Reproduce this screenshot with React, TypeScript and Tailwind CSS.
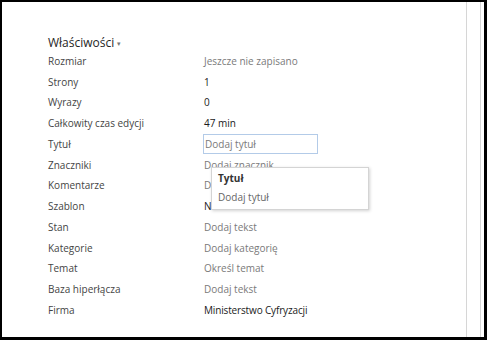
import React from "react";

const rows: { label: string; value: string; kind: "ph" | "val" | "input" }[] = [
  { label: "Rozmiar", value: "Jeszcze nie zapisano", kind: "ph" },
  { label: "Strony", value: "1", kind: "val" },
  { label: "Wyrazy", value: "0", kind: "val" },
  { label: "Całkowity czas edycji", value: "47 min", kind: "val" },
  { label: "Tytuł", value: "Dodaj tytuł", kind: "input" },
  { label: "Znaczniki", value: "Dodaj znacznik", kind: "ph" },
  { label: "Komentarze", value: "Dodaj komentarze", kind: "ph" },
  { label: "Szablon", value: "Normal", kind: "val" },
  { label: "Stan", value: "Dodaj tekst", kind: "ph" },
  { label: "Kategorie", value: "Dodaj kategorię", kind: "ph" },
  { label: "Temat", value: "Określ temat", kind: "ph" },
  { label: "Baza hiperłącza", value: "Dodaj tekst", kind: "ph" },
  { label: "Firma", value: "Ministerstwo Cyfryzacji", kind: "val" },
];

export default function App() {
  return (
    <div
      className="w-[487px] h-[340px] bg-black pt-[2px] pl-[2px] pr-[3px] pb-[3px]"
      style={{ fontFamily: '"Open Sans", "Noto Sans", sans-serif' }}
    >
      <div className="w-full h-full bg-white flex">
        <div className="flex-1 relative pl-[46px] pt-[32px]">
          <div className="flex items-center h-[18px] text-[12px] text-[#262626]">
            Właściwości
            <span className="ml-[3px] text-[7px] text-[#777] leading-none">▾</span>
          </div>
          <div className="flex flex-col -mt-[1px]">
            {rows.map((r) => (
              <div key={r.label} className="flex items-center h-[20.75px] text-[10px]">
                <div className="w-[156px] text-[#444]">{r.label}</div>
                {r.kind === "input" ? (
                  <div className="-ml-[1px] w-[115px] h-[20px] border border-[#b3cbe8] flex items-center pl-[1px] text-[#7a7a7a]">
                    {r.value}
                  </div>
                ) : (
                  <div
                    className={
                      r.kind === "ph"
                        ? "text-[#7a7a7a]"
                        : r.label === "Firma"
                        ? "text-[#1a1a1a] tracking-[-0.15px]"
                        : "text-[#1a1a1a]"
                    }
                  >
                    {r.value}
                  </div>
                )}
              </div>
            ))}
          </div>
          <div className="absolute left-[209px] top-[165px] w-[158px] h-[43px] bg-white border border-[#d4d4d4] shadow-[1px_1px_3px_rgba(0,0,0,0.18)] pl-[6px] pt-[1px] text-[10px]">
            <div className="font-bold text-[#333] h-[19px] flex items-center">Tytuł</div>
            <div className="text-[#666] h-[19px] flex items-center">Dodaj tytuł</div>
          </div>
        </div>
        <div className="w-[1px] bg-[#d6d6d6]" />
        <div className="w-[13px]" />
        <div className="w-[1px] bg-[#d6d6d6]" />
        <div className="w-[3px]" />
      </div>
    </div>
  );
}
